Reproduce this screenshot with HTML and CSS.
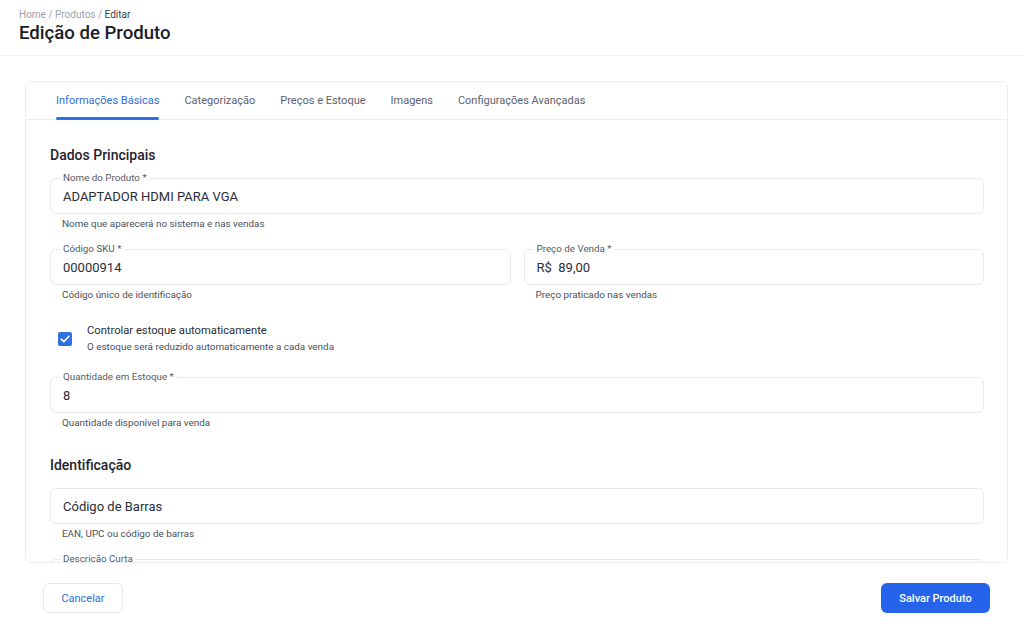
FILE: index.html
```html
<!DOCTYPE html>
<html lang="pt-BR">
<head>
  <meta charset="UTF-8">
  <title>Edição de Produto</title>
  <link rel="stylesheet" href="styles.css">
</head>
<body>
  <header class="page-header">
    <div class="breadcrumb">
      <span>Home</span> / <span>Produtos</span> / <span class="current">Editar</span>
    </div>
    <h1>Edição de Produto</h1>
  </header>

  <main class="main">
    <div class="card">
      <nav class="tabs">
        <div class="tab active">Informações Básicas</div>
        <div class="tab">Categorização</div>
        <div class="tab">Preços e Estoque</div>
        <div class="tab">Imagens</div>
        <div class="tab">Configurações Avançadas</div>
      </nav>

      <div class="card-body">
        <h2 class="section-title">Dados Principais</h2>

        <div class="field-group">
          <div class="field">
            <span class="field-label">Nome do Produto *</span>
            <span class="field-value">ADAPTADOR HDMI PARA VGA</span>
          </div>
          <div class="helper">Nome que aparecerá no sistema e nas vendas</div>
        </div>

        <div class="field-row">
          <div class="field-group">
            <div class="field">
              <span class="field-label">Código SKU *</span>
              <span class="field-value">00000914</span>
            </div>
            <div class="helper">Código único de identificação</div>
          </div>
          <div class="field-group">
            <div class="field">
              <span class="field-label">Preço de Venda *</span>
              <span class="field-value">R$&nbsp;&nbsp;89,00</span>
            </div>
            <div class="helper">Preço praticado nas vendas</div>
          </div>
        </div>

        <div class="check-row">
          <span class="checkbox">
            <svg width="14" height="14" viewBox="0 0 14 14">
              <rect width="14" height="14" rx="2" fill="#2f6fe0"/>
              <path d="M3.2 7.2 L5.8 9.7 L10.8 4.4" fill="none" stroke="#fff" stroke-width="1.6" stroke-linecap="round" stroke-linejoin="round"/>
            </svg>
          </span>
          <div class="check-text">
            <div class="check-label">Controlar estoque automaticamente</div>
            <div class="check-sub">O estoque será reduzido automaticamente a cada venda</div>
          </div>
        </div>

        <div class="field-group">
          <div class="field">
            <span class="field-label">Quantidade em Estoque *</span>
            <span class="field-value">8</span>
          </div>
          <div class="helper">Quantidade disponível para venda</div>
        </div>

        <h2 class="section-title second">Identificação</h2>

        <div class="field-group">
          <div class="field">
            <span class="field-value placeholder">Código de Barras</span>
          </div>
          <div class="helper">EAN, UPC ou código de barras</div>
        </div>

        <div class="field-group">
          <div class="field">
            <span class="field-label">Descrição Curta</span>
            <span class="field-value"></span>
          </div>
        </div>
      </div>
    </div>

    <footer class="actions">
      <button class="btn btn-outline">Cancelar</button>
      <button class="btn btn-primary">Salvar Produto</button>
    </footer>
  </main>
</body>
</html>
```

FILE: styles.css
```css
body {
  margin: 0;
  background: #fff;
  font-family: Roboto, "Noto Sans", sans-serif;
  color: #1f2330;
}

.page-header {
  height: 56px;
  padding: 8px 19px 0;
  box-sizing: border-box;
  border-bottom: 1px solid #f0f1f3;
}

.breadcrumb {
  font-size: 10px;
  line-height: 13px;
  color: #9aa1ad;
}

.breadcrumb .current {
  color: #3a3f4a;
}

.page-header h1 {
  margin: 0;
  font-size: 18.6px;
  line-height: 24px;
  font-weight: 500;
  color: #1a1d26;
}

.main {
  padding: 25px 16px 0 25px;
}

.card {
  height: 482px;
  border: 1px solid #ebedf0;
  border-radius: 6px;
  display: flex;
  flex-direction: column;
  overflow: hidden;
  box-sizing: border-box;
}

.tabs {
  display: flex;
  gap: 25px;
  padding-left: 30px;
  height: 37px;
  flex-shrink: 0;
  border-bottom: 1px solid #ebedf0;
}

.tab {
  font-size: 11px;
  color: #5c6270;
  line-height: 37px;
  position: relative;
}

.tab.active {
  color: #2f6fd6;
}

.tab.active::after {
  content: "";
  position: absolute;
  left: 0;
  right: 0;
  bottom: -1px;
  height: 3px;
  border-radius: 2px;
  background: #2f6fe0;
}

.card-body {
  padding: 25px 23px 0 24px;
  flex: 1;
  overflow: hidden;
}

.section-title {
  margin: 0 0 13px;
  font-size: 14px;
  line-height: 20px;
  font-weight: 500;
  color: #1f2330;
}

.section-title.second {
  margin-top: 26px;
}

.field-group {
  margin-bottom: 19px;
}

.field-row {
  display: grid;
  grid-template-columns: 1fr 1fr;
  gap: 13px;
}

.field {
  position: relative;
  height: 36px;
  border: 1px solid #e7e9ec;
  border-radius: 6px;
  box-sizing: border-box;
  padding: 0 12px;
  display: flex;
  align-items: center;
}

.field-label {
  position: absolute;
  top: -7px;
  left: 9px;
  padding: 0 3px;
  background: #fff;
  font-size: 9.8px;
  line-height: 12px;
  color: #555b66;
}

.field-value {
  font-size: 13px;
  color: #2a2e38;
  padding-top: 1px;
}

.helper {
  margin-top: 4px;
  padding-left: 12px;
  font-size: 9.9px;
  line-height: 12px;
  color: #4a505b;
}

.check-row {
  display: flex;
  align-items: center;
  gap: 15px;
  padding-left: 8px;
  margin: 3px 0 24px;
}

.checkbox {
  display: flex;
  margin-top: 2px;
}

.check-label {
  font-size: 11.2px;
  line-height: 16px;
  color: #2a2e38;
}

.check-sub {
  margin-top: 2px;
  font-size: 9.9px;
  line-height: 12px;
  color: #4a505b;
}

.actions {
  display: flex;
  justify-content: space-between;
  padding: 20px 18px 0 18px;
}

.btn {
  height: 30px;
  border-radius: 6px;
  font-family: Roboto, "Noto Sans", sans-serif;
  font-size: 11px;
  cursor: pointer;
}

.btn-outline {
  width: 80px;
  background: #fff;
  color: #2f6fd6;
  border: 1px solid #e7e9ec;
}

.btn-primary {
  width: 109px;
  background: #2563eb;
  color: #fff;
  border: none;
  font-weight: 500;
}
```
